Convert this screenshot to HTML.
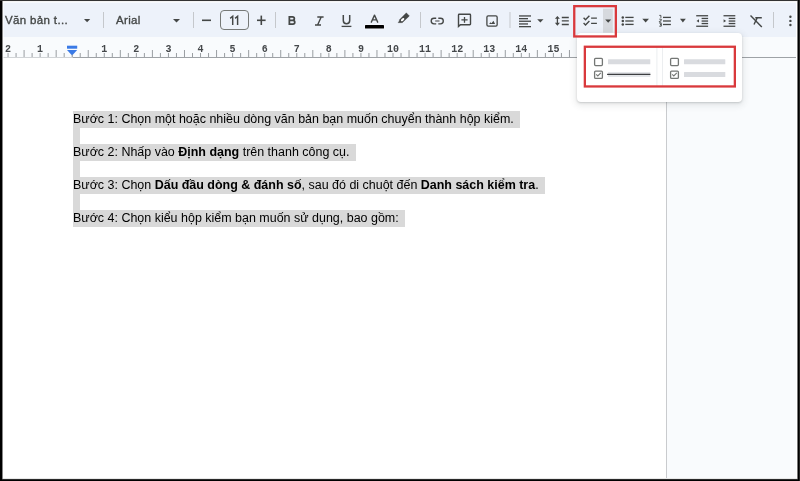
<!DOCTYPE html>
<html><head><meta charset="utf-8">
<style>
html,body{margin:0;padding:0}
body{width:800px;height:481px;position:relative;overflow:hidden;background:#fff;font-family:"Liberation Sans",sans-serif}
.a{position:absolute}
#tb{left:0;top:0;width:800px;height:36.5px;background:#edf2fa}
#ruler{left:0;top:36.5px;width:800px;height:20.5px;background:#f9fbfd}
#panel{left:666px;top:58px;width:134px;height:423px;background:#f9fbfd;border-left:1px solid #c9cbce}
.tt{font-size:11.5px;letter-spacing:0.35px;color:#444746;white-space:nowrap;line-height:14px;-webkit-text-stroke:0.35px #444746;will-change:transform}
.doc{font-size:12.47px;color:#000;white-space:nowrap;line-height:16.5px;will-change:transform}
.sel{background:#d9d9d9}
#fl{left:0;top:0;width:2px;height:481px;background:#000}
#fl2{left:2px;top:0;width:1px;height:481px;background:#888}
#ft{left:0;top:0;width:800px;height:1px;background:#333}
#ft2{left:2px;top:1px;width:796px;height:1px;background:#f4f4f4}
#fr{left:798px;top:0;width:2px;height:481px;background:#000;border-right:0}
#fr3{left:799px;top:0;width:1px;height:481px;background:#222}
#fr2{left:797px;top:0;width:1px;height:481px;background:#777}
#fw{left:796px;top:2px;width:1px;height:477px;background:#fff}
#fw2{left:2px;top:2px;width:796px;height:1px;background:rgba(255,255,255,.5)}
#fw3{left:3px;top:2px;width:1px;height:477px;background:rgba(255,255,255,.5)}
#fb{left:0;top:479px;width:800px;height:2px;background:#000;border-top:0}
#fb3{left:2px;top:479px;width:796px;height:1px;background:#2a2a2a}
#fb2{left:2px;top:478px;width:796px;height:1px;background:#e8e8e8}
#card{left:577px;top:32.5px;width:165px;height:69.3px;background:#fff;border-radius:4px;box-shadow:0 1px 2px rgba(60,64,67,.22),0 2px 6px 2px rgba(60,64,67,.1)}
</style></head><body>
<div class="a" id="tb"></div>
<div class="a" id="ruler"></div>
<div class="a" id="panel"></div>

<!-- ruler -->
<svg class="a" style="left:0;top:0;will-change:transform" width="800" height="60" viewBox="0 0 800 60">
 <rect x="0" y="57" width="72.5" height="1" fill="#d0d3d6"/>
 <rect x="72.5" y="57" width="728" height="1" fill="#9ea2a6"/>
 <g fill="#9a9ea2">
<rect x="7.54" y="53.00" width="1" height="4.00"/>
<rect x="15.56" y="53.00" width="1" height="4.00"/>
<rect x="23.58" y="50.00" width="1" height="7.00"/>
<rect x="31.60" y="53.00" width="1" height="4.00"/>
<rect x="39.62" y="53.00" width="1" height="4.00"/>
<rect x="47.64" y="53.00" width="1" height="4.00"/>
<rect x="55.66" y="50.00" width="1" height="7.00"/>
<rect x="63.68" y="53.00" width="1" height="4.00"/>
<rect x="79.72" y="53.00" width="1" height="4.00"/>
<rect x="87.74" y="50.00" width="1" height="7.00"/>
<rect x="95.76" y="53.00" width="1" height="4.00"/>
<rect x="103.78" y="53.00" width="1" height="4.00"/>
<rect x="111.80" y="53.00" width="1" height="4.00"/>
<rect x="119.82" y="50.00" width="1" height="7.00"/>
<rect x="127.84" y="53.00" width="1" height="4.00"/>
<rect x="135.86" y="53.00" width="1" height="4.00"/>
<rect x="143.88" y="53.00" width="1" height="4.00"/>
<rect x="151.90" y="50.00" width="1" height="7.00"/>
<rect x="159.92" y="53.00" width="1" height="4.00"/>
<rect x="167.94" y="53.00" width="1" height="4.00"/>
<rect x="175.96" y="53.00" width="1" height="4.00"/>
<rect x="183.98" y="50.00" width="1" height="7.00"/>
<rect x="192.00" y="53.00" width="1" height="4.00"/>
<rect x="200.02" y="53.00" width="1" height="4.00"/>
<rect x="208.04" y="53.00" width="1" height="4.00"/>
<rect x="216.06" y="50.00" width="1" height="7.00"/>
<rect x="224.08" y="53.00" width="1" height="4.00"/>
<rect x="232.10" y="53.00" width="1" height="4.00"/>
<rect x="240.12" y="53.00" width="1" height="4.00"/>
<rect x="248.14" y="50.00" width="1" height="7.00"/>
<rect x="256.16" y="53.00" width="1" height="4.00"/>
<rect x="264.18" y="53.00" width="1" height="4.00"/>
<rect x="272.20" y="53.00" width="1" height="4.00"/>
<rect x="280.22" y="50.00" width="1" height="7.00"/>
<rect x="288.24" y="53.00" width="1" height="4.00"/>
<rect x="296.26" y="53.00" width="1" height="4.00"/>
<rect x="304.28" y="53.00" width="1" height="4.00"/>
<rect x="312.30" y="50.00" width="1" height="7.00"/>
<rect x="320.32" y="53.00" width="1" height="4.00"/>
<rect x="328.34" y="53.00" width="1" height="4.00"/>
<rect x="336.36" y="53.00" width="1" height="4.00"/>
<rect x="344.38" y="50.00" width="1" height="7.00"/>
<rect x="352.40" y="53.00" width="1" height="4.00"/>
<rect x="360.42" y="53.00" width="1" height="4.00"/>
<rect x="368.44" y="53.00" width="1" height="4.00"/>
<rect x="376.46" y="50.00" width="1" height="7.00"/>
<rect x="384.48" y="53.00" width="1" height="4.00"/>
<rect x="392.50" y="53.00" width="1" height="4.00"/>
<rect x="400.52" y="53.00" width="1" height="4.00"/>
<rect x="408.54" y="50.00" width="1" height="7.00"/>
<rect x="416.56" y="53.00" width="1" height="4.00"/>
<rect x="424.58" y="53.00" width="1" height="4.00"/>
<rect x="432.60" y="53.00" width="1" height="4.00"/>
<rect x="440.62" y="50.00" width="1" height="7.00"/>
<rect x="448.64" y="53.00" width="1" height="4.00"/>
<rect x="456.66" y="53.00" width="1" height="4.00"/>
<rect x="464.68" y="53.00" width="1" height="4.00"/>
<rect x="472.70" y="50.00" width="1" height="7.00"/>
<rect x="480.72" y="53.00" width="1" height="4.00"/>
<rect x="488.74" y="53.00" width="1" height="4.00"/>
<rect x="496.76" y="53.00" width="1" height="4.00"/>
<rect x="504.78" y="50.00" width="1" height="7.00"/>
<rect x="512.80" y="53.00" width="1" height="4.00"/>
<rect x="520.82" y="53.00" width="1" height="4.00"/>
<rect x="528.84" y="53.00" width="1" height="4.00"/>
<rect x="536.86" y="50.00" width="1" height="7.00"/>
<rect x="544.88" y="53.00" width="1" height="4.00"/>
<rect x="552.90" y="53.00" width="1" height="4.00"/>
<rect x="560.92" y="53.00" width="1" height="4.00"/>
<rect x="568.94" y="50.00" width="1" height="7.00"/>
 </g>
 <g fill="#45484b" font-family="Liberation Mono" font-weight="bold" font-size="10" text-anchor="middle">
<text x="8.04" y="52">2</text>
<text x="40.12" y="52">1</text>
<text x="104.28" y="52">1</text>
<text x="136.36" y="52">2</text>
<text x="168.44" y="52">3</text>
<text x="200.52" y="52">4</text>
<text x="232.60" y="52">5</text>
<text x="264.68" y="52">6</text>
<text x="296.76" y="52">7</text>
<text x="328.84" y="52">8</text>
<text x="360.92" y="52">9</text>
<text x="393.00" y="52">10</text>
<text x="425.08" y="52">11</text>
<text x="457.16" y="52">12</text>
<text x="489.24" y="52">13</text>
<text x="521.32" y="52">14</text>
<text x="553.40" y="52">15</text>
 </g>
 <rect x="67" y="45.7" width="10.2" height="3" fill="#3a7ae6"/>
 <path d="M67 50h10.2l-5.1 5.4z" fill="#3a7ae6"/>
 <rect x="71.7" y="54.5" width="1" height="2.5" fill="#8a8e92"/>
</svg>

<!-- toolbar text -->
<div class="a tt" style="left:5px;top:13px">Văn bản t...</div>
<div class="a tt" style="left:116px;top:13px">Arial</div>
<div class="a" style="left:220px;top:10.25px;width:27.2px;height:17.7px;border:1.2px solid #767977;border-radius:4px"></div>


<!-- toolbar icons -->
<svg class="a" style="left:0;top:0" width="800" height="40" viewBox="0 0 800 40">
 <g fill="#c5c8cc">
  <rect x="103" y="12" width="1" height="16"/>
  <rect x="193" y="12" width="1" height="16"/>
  <rect x="275" y="12" width="1" height="16"/>
  <rect x="420" y="12" width="1" height="16"/>
  <rect x="509.5" y="12" width="1" height="16"/>
  <rect x="773" y="12" width="1" height="16"/>
 </g>
 <g fill="#444746">
  <path d="M84 19h6.2l-3.1 3.2z"/>
  <path d="M173 19h7l-3.5 3.5z"/>
  <rect x="202" y="19.5" width="9" height="1.6"/>
  <rect x="257" y="19.5" width="8.6" height="1.6"/>
  <rect x="260.5" y="15.6" width="1.6" height="9.4"/>
  <path d="M537.2 19.3h6.3l-3.15 3.2z"/>
  <path d="M642.3 18.8h6.7l-3.35 3.8z"/>
  <path d="M680 18.8h5.8l-2.9 3.8z"/>
 </g>
 <g fill="none" stroke="#444746">
  <path d="M230.2 18.4l2.5-2.1v8.6M235.1 18.4l2.5-2.1v8.6" stroke-width="1.45"/>
  <!-- B -->
  <path d="M289.35 16.75h3.15a1.85 1.85 0 0 1 0 3.7h-3.15zM289.35 20.45h3.6a1.8 1.8 0 0 1 0 3.6h-3.6z" stroke-width="1.75"/>
  <!-- I -->
  <path d="M317.3 17h6.3M315 25h6M321.2 17l-3.6 8" stroke-width="1.4"/>
  <!-- U -->
  <path d="M343.3 15v5.6a3.2 3.2 0 0 0 6.4 0v-5.6" stroke-width="1.5"/>
  <path d="M341.6 26.4h9.8" stroke-width="1.3"/>
  <!-- A -->
  <path d="M371.1 22.6l3.4-7.5 3.4 7.5M372.5 19.9h4" stroke-width="1.35" stroke-linejoin="round"/>
 </g>
 <rect x="364.5" y="24.5" width="20" height="4.5" rx="1" fill="#fff" opacity=".7"/>
 <rect x="365" y="25" width="19" height="3.6" rx=".6" fill="#000"/>
 <!-- highlighter -->
 <path d="M398 22.7h4.3l7.1-6.8-3.1-3.1-6.9 6.9-.1 1.2z" fill="#444746" stroke="#444746" stroke-width=".3" stroke-linejoin="round"/>
 <ellipse cx="402.6" cy="19.6" rx="2.1" ry="1.1" transform="rotate(-43 402.6 19.6)" fill="#fff"/>
 <g fill="none" stroke="#444746" stroke-width="1.5">
  <!-- link -->
  <path d="M436.2 18.2h-2.2a2.8 2.8 0 0 0 0 5.6h2.2M438.3 18.2h2.2a2.8 2.8 0 0 1 0 5.6h-2.2" stroke-width="1.35"/><path d="M435.2 21h4.3" stroke="#707274" stroke-width="1.4"/>
  <!-- comment -->
  <path d="M458.5 25.2v1.2l2-1.7h9.3a.7.7 0 0 0 .7-.7v-9.1a.7.7 0 0 0-.7-.7h-10.6a.7.7 0 0 0-.7.7z" stroke-width="1.4"/>
  <path d="M461.4 19.8h6.2M464.5 16.9v5.9" stroke-width="1.3"/>
  <!-- image -->
  <rect x="486.9" y="15.85" width="10.25" height="10.2" rx="1.3" stroke-width="1.3"/>
 </g>
 <path d="M489.2 24.1L490.4 22.2L491.5 23.2L493.4 20.8L495.1 24.1z" fill="#444746"/>
 <!-- align left -->
 <g fill="#444746">
  <rect x="519" y="15.3" width="12" height="1.3"/>
  <rect x="519" y="18" width="9" height="1.3"/>
  <rect x="519" y="20.6" width="12" height="1.3"/>
  <rect x="519" y="23.3" width="9" height="1.3"/>
  <rect x="519" y="26" width="12" height="1.3"/>
 </g>
 <!-- line spacing -->
 <g fill="none" stroke="#444746" stroke-width="1.5">
  <path d="M557.4 18v6" stroke-width="1.3"/>
  <path d="M561.8 17.5h7M561.8 20.9h7M561.8 24.5h7" stroke-width="1.4"/>
 </g>
 <path d="M554.9 18.8h5l-2.5-2.9zM554.9 22.8h5l-2.5 2.9z" fill="#444746"/>
 <!-- red box + checklist -->
 <rect x="603" y="8.7" width="9.8" height="24" fill="#d6d9de"/>
 <path d="M605.2 19.5h6l-3 3.3z" fill="#444746"/>
 <g fill="none" stroke="#444746" stroke-width="1.4">
  <path d="M583.6 17.8l1.9 1.9 3.9-3.9M583.6 23.1l1.9 1.9 3.9-3.9"/>
  <path d="M591.1 18.1h5.8M591.1 23.4h5.8"/>
 </g>
 <!-- bullets -->
 <g fill="#444746">
  <circle cx="622.8" cy="17.4" r="1.25"/><circle cx="622.8" cy="21" r="1.25"/><circle cx="622.8" cy="24.4" r="1.25"/>
  <rect x="625.3" y="16.75" width="8.3" height="1.3"/><rect x="625.3" y="20.35" width="8.3" height="1.3"/><rect x="625.3" y="23.75" width="8.3" height="1.3"/>
  <rect x="663" y="16.75" width="7.9" height="1.3"/><rect x="663" y="20.35" width="7.9" height="1.3"/><rect x="663" y="23.85" width="7.9" height="1.3"/>
 </g>
 <g fill="none" stroke="#444746" stroke-width="0.9">
  <path d="M659.3 15.4h1.6v2.5M659.3 19.2h2v1.2l-2 1.1v.6h2M659.3 23.2h2v1.5h-1.2h1.2v1.5h-2"/>
 </g>
 <!-- indents -->
 <g fill="#444746">
  <rect x="696.2" y="15.1" width="11.9" height="1.3"/>
  <rect x="701.6" y="17.8" width="6.5" height="1.3"/>
  <rect x="701.6" y="20.4" width="6.5" height="1.3"/>
  <rect x="701.6" y="22.9" width="6.5" height="1.3"/>
  <rect x="696.2" y="25.6" width="11.9" height="1.3"/>
  <path d="M699 19.3v3.3l-2.5-1.65z"/>
  <rect x="723.5" y="15.1" width="11.8" height="1.3"/>
  <rect x="728.7" y="17.8" width="6.6" height="1.3"/>
  <rect x="728.7" y="20.4" width="6.6" height="1.3"/>
  <rect x="728.7" y="22.9" width="6.6" height="1.3"/>
  <rect x="723.5" y="25.6" width="11.8" height="1.3"/>
  <path d="M723.6 19.3v3.3l2.5-1.65z"/>
 </g>
 <!-- clear formatting -->
 <g fill="none" stroke="#444746" stroke-width="1.4">
  <path d="M750.5 15.5l11.3 11.6"/>
  <path d="M755.3 17.7h6.5M757.2 17.9l-3.2 6.6"/>
 </g>
 <!-- more -->
 <g fill="#444746">
  <circle cx="790.4" cy="16.8" r="1.2"/><circle cx="790.4" cy="20.9" r="1.2"/><circle cx="790.4" cy="25" r="1.2"/>
 </g>
</svg>

<!-- dropdown card -->
<div class="a" id="card"></div>
<svg class="a" style="left:0;top:0" width="800" height="110" viewBox="0 0 800 110">
 <g fill="none" stroke="#747775" stroke-width="1.3">
  <rect x="594.6" y="58.3" width="7.8" height="7.3" rx="1"/>
  <rect x="594.6" y="71.1" width="7.8" height="7.3" rx="1"/>
  <rect x="670.6" y="58.3" width="7.8" height="7.3" rx="1"/>
  <rect x="670.6" y="71.1" width="7.8" height="7.3" rx="1"/>
  <path d="M596.2 74.4l1.6 1.6 3-3.2M672.2 74.4l1.6 1.6 3-3.2" stroke-width="1.1"/>
 </g>
 <g fill="#d9dbdf">
  <rect x="608" y="59.3" width="42.3" height="5" rx=".5"/>
  <rect x="684" y="59.3" width="41.3" height="5" rx=".5"/>
  <rect x="684" y="72" width="41.3" height="5" rx=".5"/>
  <rect x="608" y="72" width="42.3" height="5" rx=".5" fill="#e3e5e8"/>
 </g>
 <rect x="607" y="73.7" width="43.5" height="1.2" rx=".4" fill="#3c3e40"/>
 <rect x="656.4" y="46" width="1" height="41" fill="#eceef0"/>
 <rect x="662" y="46" width="1" height="41" fill="#eceef0"/>
 <g fill="none" stroke="#d9393c" stroke-width="2.3">
  <rect x="574.25" y="6.15" width="41.6" height="30.3"/>
  <rect x="584.85" y="46.75" width="150" height="39.7"/>
 </g>
</svg>

<!-- doc text -->
<div class="a sel" style="left:73px;top:111px;width:447px;height:16.5px"></div>
<div class="a sel" style="left:73px;top:127.5px;width:6.5px;height:16.5px"></div>
<div class="a sel" style="left:73px;top:144px;width:282.5px;height:16.5px"></div>
<div class="a sel" style="left:73px;top:160.5px;width:6.5px;height:16.5px"></div>
<div class="a sel" style="left:73px;top:177px;width:471.5px;height:16.5px"></div>
<div class="a sel" style="left:73px;top:193.5px;width:6.5px;height:16.5px"></div>
<div class="a sel" style="left:73px;top:210px;width:332px;height:16.5px"></div>

<div class="a doc" style="left:72.5px;top:111px">Bước 1: Chọn một hoặc nhiều dòng văn bản bạn muốn chuyển thành hộp kiểm.</div>
<div class="a doc" style="left:72.5px;top:144px">Bước 2: Nhấp vào <b>Định dạng</b> trên thanh công cụ.</div>
<div class="a doc" style="left:72.5px;top:177px">Bước 3: Chọn <b>Dấu đầu dòng &amp; đánh số</b>, sau đó di chuột đến <b>Danh sách kiểm tra</b>.</div>
<div class="a doc" style="left:72.5px;top:210px">Bước 4: Chọn kiểu hộp kiểm bạn muốn sử dụng, bao gồm:</div>

<!-- frame -->
<div class="a" id="fw"></div>
<div class="a" id="fw2"></div>
<div class="a" id="fw3"></div>
<div class="a" id="ft2"></div>
<div class="a" id="fb2"></div>
<div class="a" id="fl2"></div>
<div class="a" id="fr2"></div>
<div class="a" id="fl"></div>
<div class="a" id="ft"></div>
<div class="a" id="fr"></div>
<div class="a" id="fb"></div>
<div class="a" id="fb3"></div>
<div class="a" id="fr3"></div>
</body></html>
